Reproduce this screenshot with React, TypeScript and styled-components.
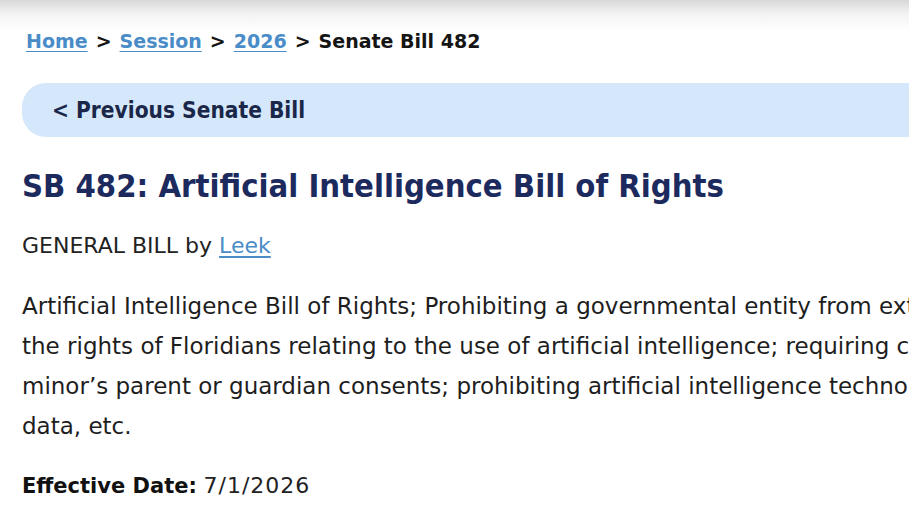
import React from "react";
import styled, { createGlobalStyle } from "styled-components";

const GlobalStyle = createGlobalStyle`
  html, body {
    margin: 0;
    padding: 0;
  }
  body {
    width: 909px;
    height: 510px;
    overflow: hidden;
    background: linear-gradient(to bottom, #d8d8d8 0px, #f3f3f3 14px, #ffffff 30px) no-repeat, #ffffff;
    font-family: "DejaVu Sans", "Noto Sans", sans-serif;
    color: #222222;
  }
`;

const Page = styled.main`
  display: flex;
  flex-direction: column;
  padding-left: 22px;
`;

const Breadcrumb = styled.nav`
  margin: 29px 0 0 4px;
  display: flex;
  align-items: center;
  gap: 8px;
  font-size: 19px;
  font-weight: 700;
  line-height: 24px;
  color: #151515;
  white-space: nowrap;
`;

const CrumbLink = styled.a`
  color: #4a8cc7;
  text-decoration: underline;
  text-underline-offset: 3px;
  cursor: pointer;
`;

const PrevBar = styled.div`
  margin: 30px -60px 0 0;
  height: 54px;
  display: flex;
  align-items: center;
  padding-left: 30px;
  border-radius: 24px 0 0 24px;
  background: #d5e8fb;
`;

const PrevLink = styled.a`
  font-family: "DejaVu Sans Condensed", "DejaVu Sans", sans-serif;
  font-stretch: condensed;
  font-size: 22.5px;
  font-weight: 700;
  color: #1b2748;
  text-decoration: none;
  cursor: pointer;
`;

const Title = styled.h1`
  margin: 29px 0 0;
  font-family: "DejaVu Sans Condensed", "DejaVu Sans", sans-serif;
  font-stretch: condensed;
  font-size: 32.5px;
  font-weight: 700;
  line-height: 40px;
  color: #1c2a5e;
  white-space: nowrap;
`;

const Sponsor = styled.div`
  margin-top: 25px;
  font-size: 22px;
  line-height: 30px;
  color: #222222;
`;

const SponsorLink = styled.a`
  color: #4a8cc7;
  text-decoration: underline;
  text-underline-offset: 3px;
  cursor: pointer;
`;

const Summary = styled.p`
  margin: 25px 0 0;
  font-size: 23px;
  line-height: 40px;
  color: #1e1e1e;
  white-space: nowrap;
`;

const Effective = styled.div`
  margin-top: 25px;
  font-size: 21px;
  line-height: 30px;
  color: #222222;
`;

const Label = styled.span`
  font-weight: 700;
  color: #111111;
`;

const DateValue = styled.span`
  font-size: 22px;
  letter-spacing: 1px;
`;

const Sep = () => <span>&gt;</span>;

export default function App() {
  return (
    <>
      <GlobalStyle />
      <Page>
        <Breadcrumb>
          <CrumbLink>Home</CrumbLink>
          <Sep />
          <CrumbLink>Session</CrumbLink>
          <Sep />
          <CrumbLink>2026</CrumbLink>
          <Sep />
          <span>Senate Bill 482</span>
        </Breadcrumb>
        <PrevBar>
          <PrevLink>&lt; Previous Senate Bill</PrevLink>
        </PrevBar>
        <Title>SB 482: Artificial Intelligence Bill of Rights</Title>
        <Sponsor>
          GENERAL BILL by <SponsorLink>Leek</SponsorLink>
        </Sponsor>
        <Summary>
          Artificial Intelligence Bill of Rights; Prohibiting a governmental entity from extending or renewing a contract; specifying
          <br />
          the rights of Floridians relating to the use of artificial intelligence; requiring certain platforms to obtain consent unless a
          <br />
          minor’s parent or guardian consents; prohibiting artificial intelligence technology companies from selling personal
          <br />
          data, etc.
        </Summary>
        <Effective>
          <Label>Effective Date:</Label> <DateValue>7/1/2026</DateValue>
        </Effective>
      </Page>
    </>
  );
}
